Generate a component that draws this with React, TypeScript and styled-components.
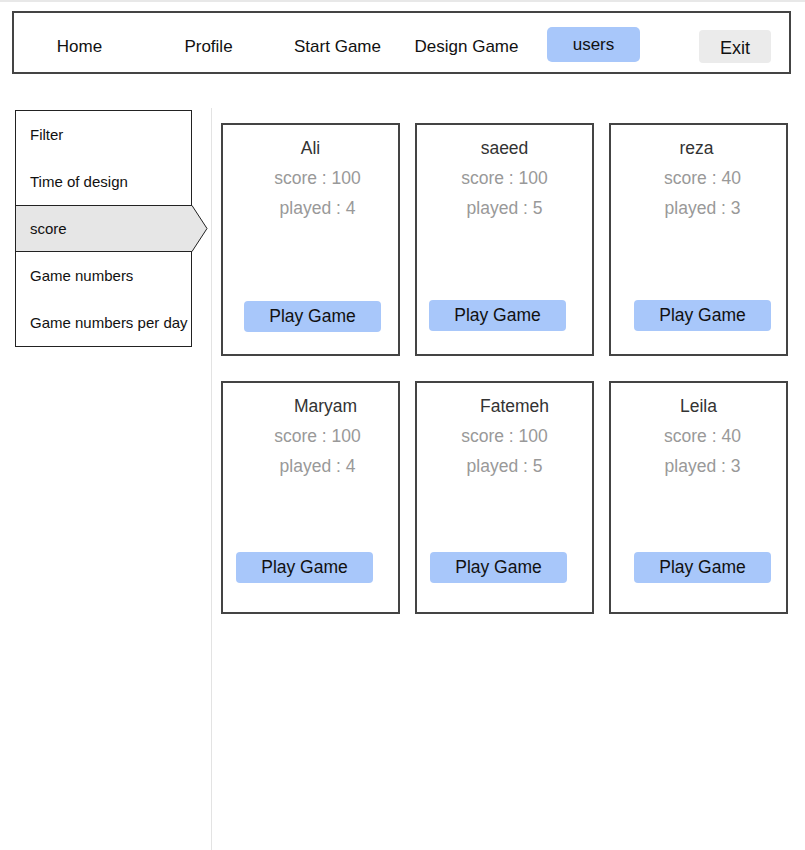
import React from "react";
import styled, { createGlobalStyle } from "styled-components";

type TPlayer = {
  name: string;
  score: number;
  played: number;
  nameShift: number;
  statShift: number;
  btnTop: number;
  btnLeft: number;
};

const players: TPlayer[] = [
  { name: "Ali", score: 100, played: 4, nameShift: 0, statShift: 7, btnTop: 78, btnLeft: 21 },
  { name: "saeed", score: 100, played: 5, nameShift: 0, statShift: 0, btnTop: 77, btnLeft: 12 },
  { name: "reza", score: 40, played: 3, nameShift: -2, statShift: 4, btnTop: 77, btnLeft: 23 },
  { name: "Maryam", score: 100, played: 4, nameShift: 15, statShift: 7, btnTop: 71, btnLeft: 13 },
  { name: "Fatemeh", score: 100, played: 5, nameShift: 10, statShift: 0, btnTop: 71, btnLeft: 13 },
  { name: "Leila", score: 40, played: 3, nameShift: 0, statShift: 4, btnTop: 71, btnLeft: 23 },
];

const filters = ["Filter", "Time of design", "score", "Game numbers", "Game numbers per day"];
const links = ["Home", "Profile", "Start Game", "Design Game"];

const App = () => {
  return (
    <SPage>
      <GlobalStyle />
      <SNav>
        {links.map((l) => (
          <SNavLink key={l}>{l}</SNavLink>
        ))}
        <SNavButton $tone="blue">users</SNavButton>
        <SNavButton $tone="gray">Exit</SNavButton>
      </SNav>
      <SMain>
        <SSideArea>
          <SFilters>
            {filters.map((f) => (
              <SFilterRow key={f} $active={f === "score"}>
                {f}
                {f === "score" && (
                  <SArrow width="17" height="47" viewBox="0 0 17 47">
                    <polygon points="0,0 1,0 16,23.5 1,47 0,47" fill="#e6e6e6" />
                    <polyline
                      points="0,0.5 1,0.5 16,23.5 1,46.5 0,46.5"
                      fill="none"
                      stroke="#222"
                      strokeWidth="1"
                    />
                  </SArrow>
                )}
              </SFilterRow>
            ))}
          </SFilters>
        </SSideArea>
        <SContent>
          <SGrid>
            {players.map((p) => (
              <SCard key={p.name}>
                <SName $shift={p.nameShift}>{p.name}</SName>
                <SStat $shift={p.statShift}>score : {p.score}</SStat>
                <SStat $shift={p.statShift}>played : {p.played}</SStat>
                <SPlayButton $top={p.btnTop} $left={p.btnLeft}>
                  Play Game
                </SPlayButton>
              </SCard>
            ))}
          </SGrid>
        </SContent>
      </SMain>
    </SPage>
  );
};

export default App;

const GlobalStyle = createGlobalStyle`
  body {
    margin: 0;
    background: #fff;
    font-family: "Liberation Sans", Arial, sans-serif;
  }
  * {
    box-sizing: border-box;
  }
`;

const SPage = styled.div`
  border-top: 2px solid #e8e8e8;
  height: 100vh;
  display: flex;
  flex-direction: column;
`;

const SNav = styled.div`
  margin: 9px 14px 0 12px;
  height: 63px;
  border: 2px solid #444;
  padding-left: 1px;
  display: flex;
  align-items: flex-start;
`;

const SNavLink = styled.div`
  width: 129px;
  margin-top: 24px;
  text-align: center;
  font-size: 17px;
  line-height: 20px;
  color: #111;
`;

const SNavButton = styled.div<{ $tone: "blue" | "gray" }>`
  text-align: center;
  color: #111;
  ${({ $tone }) =>
    $tone === "blue"
      ? `
    margin: 14px 0 0 16px;
    width: 93px;
    height: 35px;
    line-height: 35px;
    font-size: 17px;
    border-radius: 5px;
    background: #a8c7fa;
  `
      : `
    margin: 17px 0 0 59px;
    width: 72px;
    height: 33px;
    padding-top: 4px;
    line-height: 29px;
    font-size: 18px;
    border-radius: 4px;
    background: #ebebeb;
  `}
`;

const SMain = styled.div`
  flex: 1;
  display: flex;
  margin-top: 34px;
`;

const SSideArea = styled.div`
  width: 211px;
  padding: 2px 0 0 15px;
`;

const SFilters = styled.div`
  width: 177px;
  border: 1px solid #222;
`;

const SFilterRow = styled.div<{ $active: boolean }>`
  position: relative;
  height: 47px;
  padding-left: 14px;
  padding-bottom: 1px;
  display: flex;
  align-items: center;
  font-size: 15px;
  color: #111;
  background: ${({ $active }) => ($active ? "#e6e6e6" : "transparent")};
  border-top: 1px solid ${({ $active }) => ($active ? "#222" : "transparent")};
  border-bottom: 1px solid ${({ $active }) => ($active ? "#222" : "transparent")};
`;

const SArrow = styled.svg`
  position: absolute;
  left: 100%;
  top: -1px;
  display: block;
`;

const SContent = styled.div`
  flex: 1;
  border-left: 1px solid #e3e3e3;
  padding: 15px 0 0 9px;
`;

const SGrid = styled.div`
  display: grid;
  grid-template-columns: repeat(3, 179px);
  grid-auto-rows: 233px;
  column-gap: 15px;
  row-gap: 25px;
`;

const SCard = styled.div`
  border: 2px solid #444;
  padding-top: 8px;
  display: flex;
  flex-direction: column;
`;

const shiftCss = (shift: number) =>
  shift >= 0 ? `margin-left: ${shift * 2}px;` : `margin-right: ${-shift * 2}px;`;

const SName = styled.div<{ $shift: number }>`
  ${({ $shift }) => shiftCss($shift)}
  text-align: center;
  font-size: 17.5px;
  line-height: 30px;
  color: #333;
`;

const SStat = styled.div<{ $shift: number }>`
  ${({ $shift }) => shiftCss($shift)}
  text-align: center;
  font-size: 17.5px;
  line-height: 30px;
  color: #999;
`;

const SPlayButton = styled.div<{ $top: number; $left: number }>`
  margin-top: ${({ $top }) => $top}px;
  margin-left: ${({ $left }) => $left}px;
  width: 137px;
  height: 31px;
  line-height: 31px;
  text-align: center;
  font-size: 17.5px;
  color: #111;
  background: #a8c7fa;
  border-radius: 4px;
`;
